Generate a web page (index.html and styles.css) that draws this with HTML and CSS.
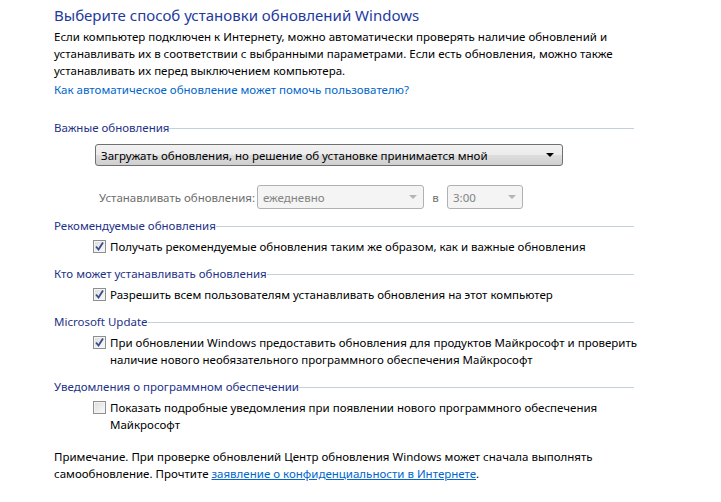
FILE: index.html
```html
<!DOCTYPE html>
<html lang="ru">
<head>
    <meta charset="UTF-8">
    <title>Центр обновления Windows</title>
    <link rel="stylesheet" href="styles.css">
</head>
<body>
    <div class="page">
        <h1 class="title">Выберите способ установки обновлений Windows</h1>
        <p class="intro">Если компьютер подключен к Интернету, можно автоматически проверять наличие обновлений и устанавливать их в соответствии с выбранными параметрами. Если есть обновления, можно также устанавливать их перед выключением компьютера.</p>
        <a class="help-link" href="#">Как автоматическое обновление может помочь пользователю?</a>

        <div class="group important">
            <div class="group-head"><span>Важные обновления</span></div>
            <div class="select main-select">
                <span>Загружать обновления, но решение об установке принимается мной</span>
                <span class="arrow"></span>
            </div>
            <div class="schedule">
                <span class="label">Устанавливать обновления:</span>
                <div class="select disabled day-select"><span>ежедневно</span><span class="arrow"></span></div>
                <span class="label at">в</span>
                <div class="select disabled time-select"><span>3:00</span><span class="arrow"></span></div>
            </div>
        </div>

        <div class="group recommended">
            <div class="group-head"><span>Рекомендуемые обновления</span></div>
            <label class="check"><span class="box checked"></span><span class="text">Получать рекомендуемые обновления таким же образом, как и важные обновления</span></label>
        </div>

        <div class="group">
            <div class="group-head"><span>Кто может устанавливать обновления</span></div>
            <label class="check"><span class="box checked"></span><span class="text">Разрешить всем пользователям устанавливать обновления на этот компьютер</span></label>
        </div>

        <div class="group">
            <div class="group-head"><span>Microsoft Update</span></div>
            <label class="check"><span class="box checked"></span><span class="text">При обновлении Windows предоставить обновления для продуктов Майкрософт и проверить наличие нового необязательного программного обеспечения Майкрософт</span></label>
        </div>

        <div class="group">
            <div class="group-head"><span>Уведомления о программном обеспечении</span></div>
            <label class="check"><span class="box"></span><span class="text">Показать подробные уведомления при появлении нового программного обеспечения Майкрософт</span></label>
        </div>

        <p class="note">Примечание. При проверке обновлений Центр обновления Windows может сначала выполнять самообновление. Прочтите <a href="#">заявление о конфиденциальности в Интернете</a>.</p>
    </div>
</body>
</html>
```

FILE: styles.css
```css
body {
    margin: 0;
    background: #ffffff;
    font-family: "Noto Sans", "Liberation Sans", sans-serif;
    font-size: 11.5px;
    color: #000000;
}

.page {
    width: 600px;
    padding: 5px 0 0 54px;
}

.title {
    margin: 0;
    font-size: 15px;
    font-weight: normal;
    color: #1e3a9e;
    line-height: 21px;
}

.intro {
    width: 580px;
    margin: 2px 0 0;
    line-height: 17px;
}

.help-link {
    display: block;
    margin-top: 2px;
    line-height: 17px;
    color: #0066cc;
    text-decoration: none;
}

.group {
    margin-top: 10px;
}

.important {
    margin-top: 21px;
}

.recommended {
    margin-top: 8px;
}

.group-head {
    width: 580px;
    display: flex;
    align-items: center;
    line-height: 17px;
    color: #1e3287;
}

.group-head::after {
    content: "";
    flex: 1;
    height: 1px;
    margin-top: 1px;
    background: #c4d0dc;
}

.select {
    display: flex;
    align-items: center;
    justify-content: space-between;
    box-sizing: border-box;
    height: 22px;
    padding: 0 8px 0 5px;
    border: 1px solid #707070;
    border-radius: 3px;
    background: linear-gradient(#f2f2f2 0%, #ebebeb 50%, #dddddd 51%, #cfcfcf 100%);
}

.select .arrow {
    width: 0;
    height: 0;
    border-left: 4px solid transparent;
    border-right: 4px solid transparent;
    border-top: 4px solid #000000;
}

.main-select {
    width: 468px;
    margin: 8px 0 0 41px;
}

.schedule {
    display: flex;
    align-items: center;
    margin: 19px 0 0 45px;
    color: #6d6d6d;
}

.schedule .label:first-child {
    width: 158px;
}

.select.disabled {
    height: 24px;
    border-color: #adb2b5;
    background: #f4f4f4;
    color: #838383;
    padding-right: 6px;
}

.select.disabled .arrow {
    border-top-color: #b4b4b4;
}

.day-select {
    width: 167px;
}

.at {
    width: 23px;
    text-align: center;
}

.time-select {
    width: 76px;
}

.check {
    display: flex;
    align-items: flex-start;
    margin: 4px 0 0 39px;
    line-height: 17px;
}

.box {
    flex: none;
    box-sizing: border-box;
    width: 13px;
    height: 13px;
    margin: 2px 4px 0 0;
    border: 1px solid #8f8f8f;
    background: linear-gradient(135deg, #dcdcdc, #fbfbfb);
    box-shadow: inset 0 0 0 1px #f4f4f4;
}

.box.checked {
    background-image: url("data:image/svg+xml;utf8,<svg xmlns='http://www.w3.org/2000/svg' width='11' height='11'><path d='M2 5.5 L4.5 8.5 L9 1.5' fill='none' stroke='%23344c8e' stroke-width='1.8'/></svg>"), linear-gradient(135deg, #dcdcdc, #fbfbfb);
}

.note {
    width: 580px;
    margin: 15px 0 0;
    line-height: 17px;
}

.note a {
    color: #0066cc;
}
```
